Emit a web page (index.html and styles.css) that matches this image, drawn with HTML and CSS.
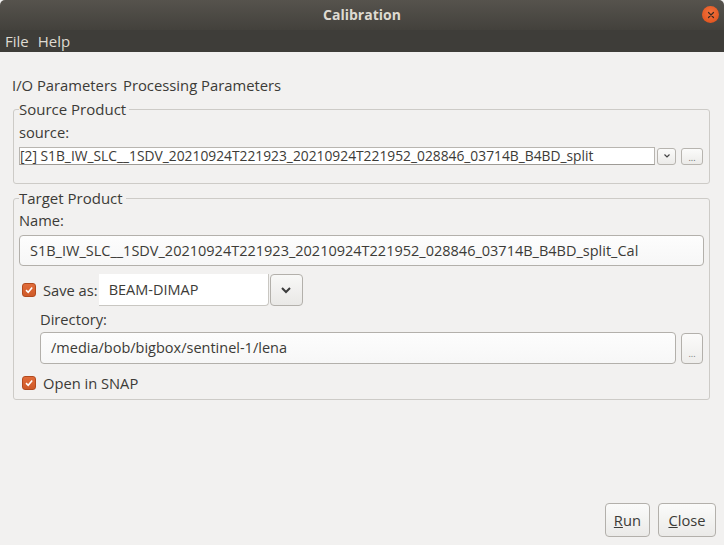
FILE: index.html
```html
<!DOCTYPE html>
<html>
<head>
<meta charset="utf-8">
<link rel="stylesheet" href="styles.css">
</head>
<body>
<div class="window">
  <div class="titlebar">
    <span class="title">Calibration</span>
    <span class="close"><svg width="16" height="16" viewBox="0 0 16 16"><path d="M5.5 5.5 L10.5 10.5 M10.5 5.5 L5.5 10.5" stroke="#3a2a20" stroke-width="1.2" stroke-linecap="round"/></svg></span>
  </div>
  <div class="menubar"><span>File</span><span>Help</span></div>
  <div class="content">
    <div class="tabs"><span>I/O Parameters</span><span>Processing Parameters</span></div>
    <fieldset class="group source">
      <legend>Source Product</legend>
      <div class="label">source:</div>
      <div class="row">
        <div class="combo">[2] S1B_IW_SLC__1SDV_20210924T221923_20210924T221952_028846_03714B_B4BD_split</div>
        <div class="mini-btn"><svg width="8" height="6" viewBox="0 0 8 6"><path d="M1.5 1.5 L4 4 L6.5 1.5" fill="none" stroke="#444" stroke-width="1.2"/></svg></div>
        <div class="mini-btn dots">...</div>
      </div>
    </fieldset>
    <fieldset class="group target">
      <legend>Target Product</legend>
      <div class="label">Name:</div>
      <div class="field name">S1B_IW_SLC__1SDV_20210924T221923_20210924T221952_028846_03714B_B4BD_split_Cal</div>
      <div class="row saverow">
        <span class="check"><svg width="10" height="10" viewBox="0 0 10 10"><path d="M2 5.2 L4.2 7.3 L8.2 2.6" fill="none" stroke="#fff" stroke-width="1.6"/></svg></span>
        <span class="check-label">Save as:</span>
        <div class="format">BEAM-DIMAP</div>
        <div class="drop"><svg width="12" height="8" viewBox="0 0 12 8"><path d="M2 2 L6 6 L10 2" fill="none" stroke="#3c3c3c" stroke-width="2"/></svg></div>
      </div>
      <div class="indent">
        <div class="label">Directory:</div>
        <div class="row">
          <div class="field dir">/media/bob/bigbox/sentinel-1/lena</div>
          <div class="dir-btn">...</div>
        </div>
      </div>
      <div class="row snaprow">
        <span class="check"><svg width="10" height="10" viewBox="0 0 10 10"><path d="M2 5.2 L4.2 7.3 L8.2 2.6" fill="none" stroke="#fff" stroke-width="1.6"/></svg></span>
        <span class="check-label">Open in SNAP</span>
      </div>
    </fieldset>
    <div class="spacer"></div>
    <div class="buttons">
      <button class="btn"><u>R</u>un</button>
      <button class="btn close-btn"><u>C</u>lose</button>
    </div>
  </div>
</div>
</body>
</html>
```
FILE: styles.css
```css
html, body {
  margin: 0;
  padding: 0;
}
body {
  width: 724px;
  height: 545px;
  overflow: hidden;
  font-family: "Open Sans", "DejaVu Sans", sans-serif;
  color: #3c3b37;
  background: #f2f1f0;
}
.window {
  display: flex;
  flex-direction: column;
  height: 545px;
}
.titlebar {
  height: 30px;
  background: linear-gradient(#56534d, #43413c);
  display: flex;
  align-items: center;
  justify-content: center;
  position: relative;
  border-radius: 5px 5px 0 0;
}
.title {
  color: #dfdbd2;
  font-weight: bold;
  font-size: 14px;
  margin-top: -2px;
}
.close {
  position: absolute;
  right: 5px;
  top: 6px;
  width: 17px;
  height: 17px;
  border-radius: 50%;
  background: radial-gradient(circle at 50% 40%, #f3733e, #dd4d17);
  display: flex;
  align-items: center;
  justify-content: center;
}
.menubar {
  height: 22px;
  background: #3e3d39;
  color: #dfdbd2;
  font-size: 15px;
  display: flex;
  align-items: center;
  gap: 9px;
  padding-left: 5px;
}
.content {
  flex: 1;
  display: flex;
  flex-direction: column;
  padding: 24px 14px 8px 13px;
}
.tabs {
  font-size: 14.8px;
  display: flex;
  gap: 6px;
  padding-left: 0;
  margin-bottom: 6px;
  line-height: 18px;
  margin-left: -1px;
}
.group {
  margin: 0;
  border: 1px solid #cdcbc7;
  border-radius: 3px;
  padding: 0 6px 0 5px;
}
.group legend {
  font-size: 15px;
  padding: 0 3px 0 0;
  margin-left: 0;
  line-height: 18px;
}
.label {
  font-size: 14.7px;
  line-height: 18px;
}
.row {
  display: flex;
  align-items: center;
}
.source {
  padding-bottom: 18px;
}
.source .label {
  margin-top: 5px;
}
.combo {
  flex: 1;
  height: 16px;
  margin-top: 6px;
  background: #fff;
  border: 1px solid #b8b5b0;
  border-bottom-color: #9e9b96;
  font-size: 13.8px;
  line-height: 16px;
  white-space: nowrap;
  overflow: hidden;
}
.mini-btn {
  width: 17px;
  height: 15px;
  margin-top: 6px;
  margin-left: 2px;
  border: 1px solid #b7b4af;
  border-radius: 3px;
  background: linear-gradient(#fbfbfa, #ecebe9);
  display: flex;
  align-items: center;
  justify-content: center;
  font-size: 9px;
  color: #666;
}
.mini-btn.dots {
  width: 20px;
  margin-left: 5px;
  align-items: flex-end;
  line-height: 12px;
}
.target {
  margin-top: 5px;
  padding-bottom: 6px;
}
.target > .label {
  margin-top: 4px;
}
.field {
  height: 29px;
  border: 1px solid #b3b0ab;
  border-radius: 4px;
  background: linear-gradient(#fdfdfd, #f7f7f7);
  font-size: 14.5px;
  line-height: 29px;
  padding-left: 10px;
  white-space: nowrap;
  overflow: hidden;
}
.name {
  margin-top: 6px;
  margin-right: -1px;
}
.saverow {
  margin-top: 8px;
  height: 32px;
}
.check {
  width: 14px;
  height: 14px;
  margin-left: 3px;
  border-radius: 3px;
  background: linear-gradient(#e16c3a, #cf5a28);
  border: 1px solid #b24a1e;
  box-sizing: border-box;
  display: flex;
  align-items: center;
  justify-content: center;
}
.check-label {
  font-size: 14.7px;
  margin-left: 7px;
}
.format {
  margin-left: 1px;
  width: 159px;
  height: 31px;
  padding-left: 10px;
  background: #fff;
  border-right: 1px solid #c9c7c2;
  border-bottom: 1px solid #c9c7c2;
  border-radius: 0 0 4px 0;
  font-size: 14.5px;
  line-height: 31px;
}
.drop {
  width: 31px;
  height: 30px;
  margin-left: 1px;
  border: 1px solid #b3b0ab;
  border-radius: 4px;
  background: linear-gradient(#f8f8f7, #e9e8e6);
  display: flex;
  align-items: center;
  justify-content: center;
}
.indent {
  padding-left: 21px;
}
.indent .label {
  margin-top: 4px;
}
.dir {
  flex: 1;
  margin-top: 4px;
  height: 30px;
  line-height: 30px;
}
.dir-btn {
  width: 20px;
  height: 29px;
  margin-top: 4px;
  margin-left: 5px;
  border: 1px solid #b3b0ab;
  border-radius: 4px;
  background: linear-gradient(#fbfbfa, #eeedeb);
  font-size: 9px;
  color: #777;
  display: flex;
  align-items: flex-end;
  justify-content: center;
  line-height: 18px;
}
.snaprow {
  margin-top: 9px;
  height: 20px;
}
.spacer {
  flex: 1;
}
.buttons {
  display: flex;
  justify-content: flex-end;
  gap: 8px;
  margin-right: -6px;
}
.btn {
  font-family: inherit;
  font-size: 14.7px;
  color: #3c3b37;
  height: 34px;
  padding: 0 8px;
  border: 1px solid #b3b0ab;
  border-radius: 4px;
  background: linear-gradient(#fbfbfa, #ebeae8);
}
.close-btn {
  padding: 0 9.5px;
}
```
